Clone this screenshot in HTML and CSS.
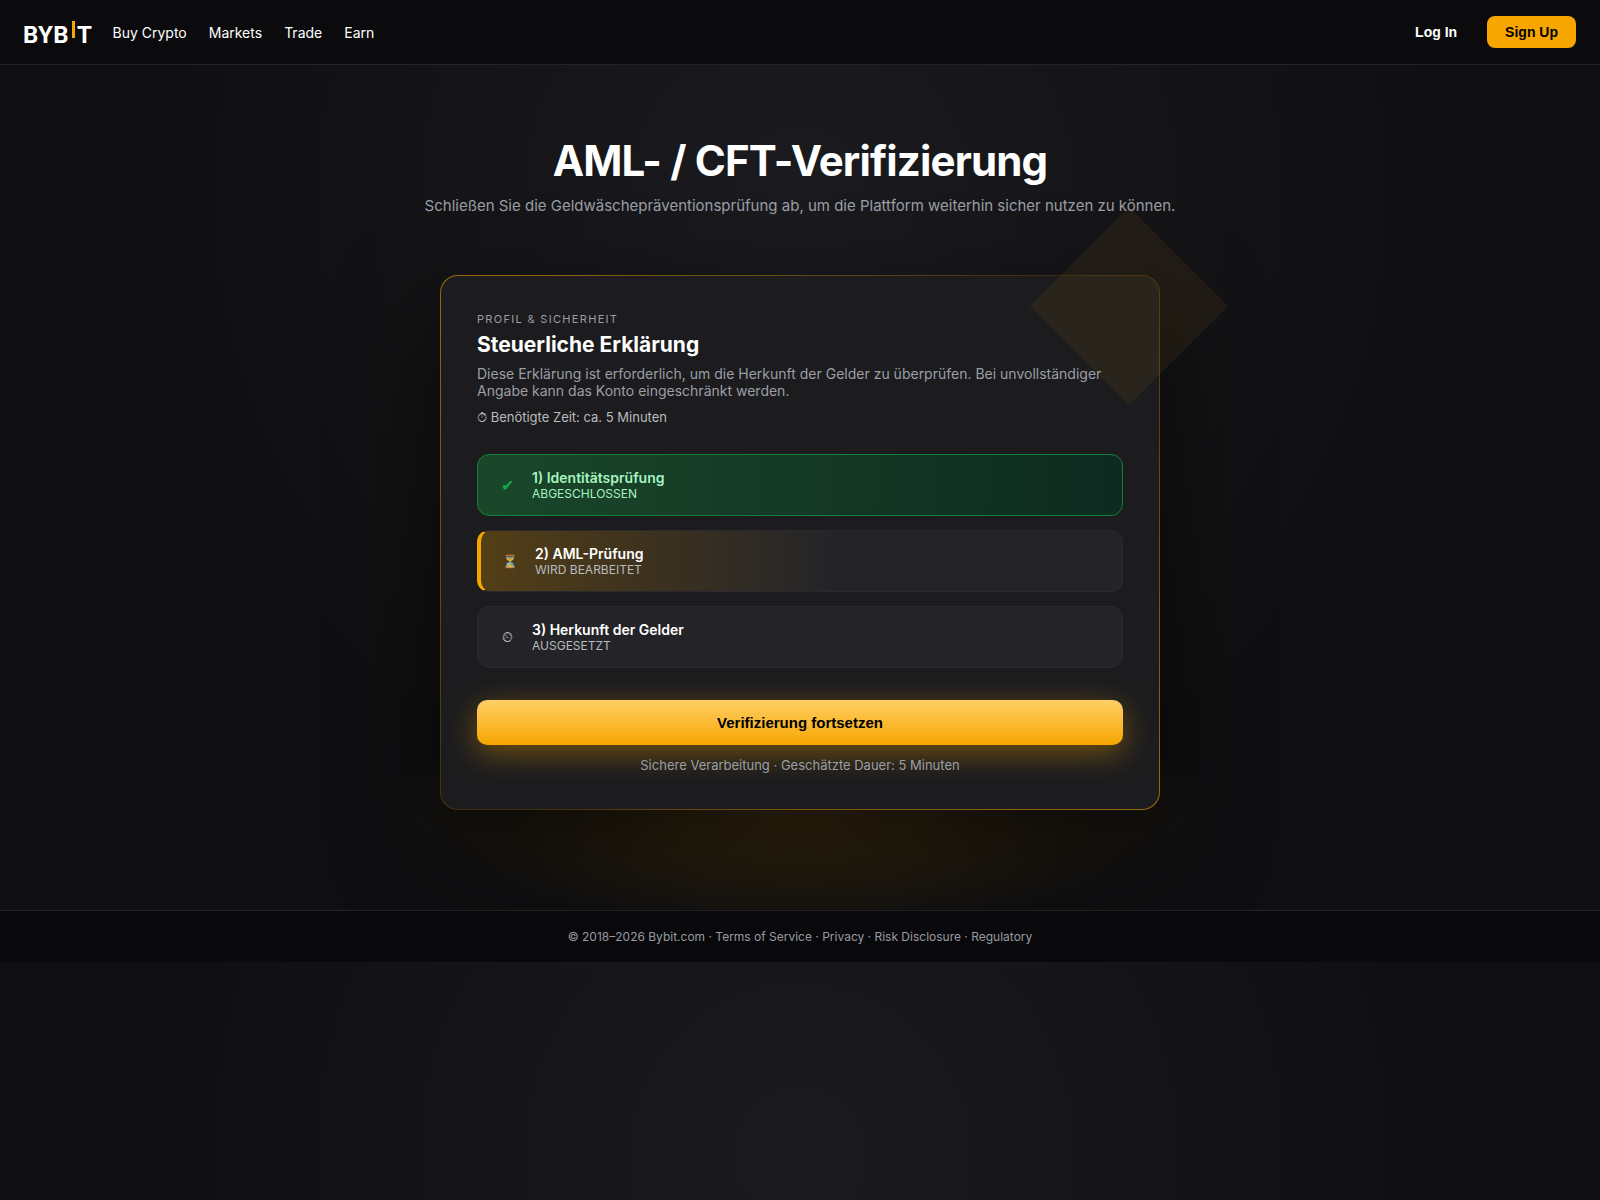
FILE: index.html
```html
<!DOCTYPE html>
<html lang="de">
<head>
  <meta charset="UTF-8">
  <meta name="viewport" content="width=device-width, initial-scale=1.0">
  <title>AML- / CFT-Verifizierung</title>
  <link rel="stylesheet" href="styles.css">
</head>
<body>
  <!-- Header -->
  <header class="header">
    <div class="nav-left">
      <div class="logo">BYB<span class="logo-bar"></span>T</div>
      <nav class="nav">
        <a href="#">Buy Crypto</a>
        <a href="#">Markets</a>
        <a href="#">Trade</a>
        <a href="#">Earn</a>
      </nav>
    </div>
    <div class="nav-right">
      <button class="btn-login">Log In</button>
      <button class="btn-signup">Sign Up</button>
    </div>
  </header>

  <main class="main">
    <h1>AML- / CFT-Verifizierung</h1>
    <p class="subtitle">Schließen Sie die Geldwäschepräventionsprüfung ab, um die Plattform weiterhin sicher nutzen zu können.</p>

    <!-- Verification card -->
    <section class="card">
      <div class="label">Profil &amp; Sicherheit</div>
      <h2>Steuerliche Erklärung</h2>
      <p class="desc">Diese Erklärung ist erforderlich, um die Herkunft der Gelder zu überprüfen. Bei unvollständiger Angabe kann das Konto eingeschränkt werden.</p>
      <div class="time">⏱ Benötigte Zeit: ca. 5 Minuten</div>

      <div class="steps">
        <div class="step done">
          <div class="icon">✔</div>
          <div>
            <div class="step-title">1) Identitätsprüfung</div>
            <div class="step-status">ABGESCHLOSSEN</div>
          </div>
        </div>
        <div class="step active">
          <div class="icon">⏳</div>
          <div>
            <div class="step-title">2) AML-Prüfung</div>
            <div class="step-status">WIRD BEARBEITET</div>
          </div>
        </div>
        <div class="step">
          <div class="icon">⏲</div>
          <div>
            <div class="step-title">3) Herkunft der Gelder</div>
            <div class="step-status">AUSGESETZT</div>
          </div>
        </div>
      </div>

      <button class="cta">Verifizierung fortsetzen</button>
      <div class="note">Sichere Verarbeitung · Geschätzte Dauer: 5 Minuten</div>
    </section>
  </main>

  <footer class="footer">© 2018–2026 Bybit.com · Terms of Service · Privacy · Risk Disclosure · Regulatory</footer>
</body>
</html>
```

FILE: styles.css
```css
* {
  box-sizing: border-box;
}

body {
  margin: 0;
  font-family: Inter, sans-serif;
  color: #fff;
  background: radial-gradient(circle at 50% 20%, #1b1b1f, #0f0f11 60%);
}

/* Header */
.header {
  height: 65px;
  padding: 0 24px 0 23px;
  display: flex;
  justify-content: space-between;
  align-items: center;
  background: #0b0b0d;
  border-bottom: 1px solid #242427;
}

.nav-left {
  display: flex;
  align-items: center;
  gap: 22px;
}

.logo {
  width: 67.5px;
  padding-top: 6px;
  font-family: Roboto, sans-serif;
  font-size: 24px;
  font-weight: 700;
  line-height: 28px;
  letter-spacing: 0.4px;
  white-space: nowrap;
}

.logo-bar {
  display: inline-block;
  width: 3.5px;
  height: 17px;
  margin: 0 2px 0 2.5px;
  position: relative;
  top: -5px;
  background: #f7a600;
}

.nav {
  display: flex;
  gap: 22px;
  font-size: 14px;
}

.nav a {
  color: #fff;
  text-decoration: none;
}

.nav-right {
  display: flex;
  align-items: center;
  gap: 12px;
}

button {
  font-family: "Liberation Sans", Arial, sans-serif;
  font-weight: 700;
  border: none;
  cursor: pointer;
}

.btn-login,
.btn-signup {
  height: 32px;
  padding: 0 18px;
  font-size: 14px;
  border-radius: 8px;
}

.btn-login {
  background: transparent;
  color: #fff;
}

.btn-signup {
  background: #f7a600;
  color: #000;
}

/* Main */
.main {
  padding: 70px 20px 100px;
  text-align: center;
}

h1 {
  margin: 0 0 10px;
  font-size: 42px;
  font-weight: 700;
  line-height: 51px;
  letter-spacing: -0.02em;
}

.subtitle {
  margin: 0 0 60px;
  font-size: 15px;
  line-height: 19px;
  color: #9a9fa5;
}

.card {
  position: relative;
  width: 720px;
  margin: 0 auto;
  padding: 37px 36px 36px;
  text-align: left;
  border: 1px solid transparent;
  border-radius: 18px;
  background:
    linear-gradient(#1c1c1e, #1c1c1e) padding-box,
    linear-gradient(135deg, rgba(247, 166, 0, 0.6), rgba(247, 166, 0, 0.15), rgba(247, 166, 0, 0.6)) border-box;
  box-shadow: 0 40px 100px rgba(0, 0, 0, 0.6);
}

/* Tilted square over the corner */
.card::before {
  content: "";
  position: absolute;
  top: -40px;
  right: -40px;
  width: 140px;
  height: 140px;
  background: rgba(247, 166, 0, 0.06);
  transform: rotate(45deg);
}

/* Glow below the card */
.card::after {
  content: "";
  position: absolute;
  left: -60px;
  right: -60px;
  bottom: -120px;
  height: 240px;
  background: radial-gradient(ellipse at center, rgba(247, 166, 0, 0.2), transparent 70%);
  z-index: -1;
}

.label {
  font-size: 11px;
  line-height: 13px;
  letter-spacing: 0.12em;
  text-transform: uppercase;
  color: #9a9fa5;
}

h2 {
  margin: 6px 0 7px;
  font-size: 21px;
  font-weight: 700;
  line-height: 26px;
}

.desc {
  margin: 0 0 10px;
  font-size: 14px;
  line-height: 17px;
  color: #9a9fa5;
}

.time {
  font-size: 13px;
  line-height: 16px;
  color: #b8bbbf;
}

.steps {
  display: flex;
  flex-direction: column;
  gap: 14px;
  margin: 29px 0 32px;
}

.step {
  display: flex;
  align-items: center;
  gap: 14px;
  height: 62px;
  padding: 0 18px;
  background: #242428;
  border: 1px solid #2a2a2e;
  border-radius: 12px;
}

.step.done {
  background: linear-gradient(90deg, #1a472a, #0d2b20);
  border-color: #15803d;
  color: #a7f3c0;
}

.step.active {
  background: linear-gradient(90deg, rgba(247, 166, 0, 0.25), #242428 55%);
  border-left: 4px solid #f7a600;
}

.icon {
  width: 22px;
  font-size: 14px;
  text-align: center;
  color: #b8bbbf;
}

.done .icon {
  font-size: 16px;
  color: #16a34a;
}

.active .icon {
  font-size: 13px;
  opacity: 0.85;
}

.step-title {
  font-size: 14px;
  font-weight: 600;
  line-height: 17px;
}

.step-status {
  font-size: 12px;
  line-height: 15px;
  color: #b8bbbf;
}

.done .step-status {
  color: #a7f3c0;
}

.cta {
  width: 100%;
  height: 45px;
  font-size: 15px;
  color: #000;
  border-radius: 10px;
  background: linear-gradient(180deg, #ffcf66, #f7a600);
  box-shadow: 0 8px 30px rgba(247, 166, 0, 0.4);
}

.note {
  margin-top: 12px;
  font-size: 13px;
  line-height: 16px;
  text-align: center;
  color: #9a9fa5;
}

/* Footer */
.footer {
  padding: 18px 20px;
  font-size: 12px;
  line-height: 15px;
  text-align: center;
  color: #9a9fa5;
  background: #0a0a0c;
  border-top: 1px solid #242427;
}
```
